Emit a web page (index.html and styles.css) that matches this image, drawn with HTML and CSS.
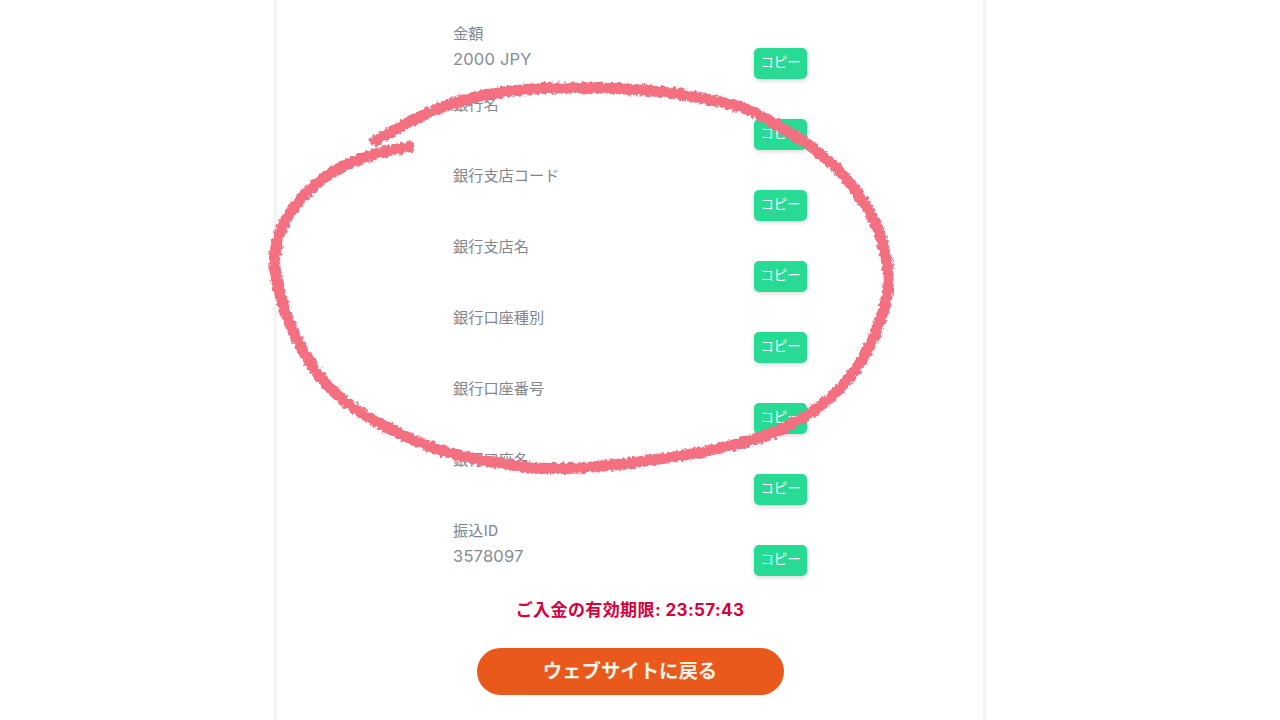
FILE: index.html
```html
<!DOCTYPE html>
<html lang="ja">
<head>
<meta charset="utf-8">
<title>ご入金</title>
<link rel="stylesheet" href="styles.css">
</head>
<body>
<main class="card">
  <div class="list">
    <div class="row"><div class="info"><div class="label">金額</div><div class="value">2000 JPY</div></div><button class="copy">コピー</button></div>
    <div class="row"><div class="info"><div class="label">銀行名</div><div class="value"></div></div><button class="copy">コピー</button></div>
    <div class="row"><div class="info"><div class="label">銀行支店コード</div><div class="value"></div></div><button class="copy">コピー</button></div>
    <div class="row"><div class="info"><div class="label">銀行支店名</div><div class="value"></div></div><button class="copy">コピー</button></div>
    <div class="row"><div class="info"><div class="label">銀行口座種別</div><div class="value"></div></div><button class="copy">コピー</button></div>
    <div class="row"><div class="info"><div class="label">銀行口座番号</div><div class="value"></div></div><button class="copy">コピー</button></div>
    <div class="row"><div class="info"><div class="label">銀行口座名</div><div class="value"></div></div><button class="copy">コピー</button></div>
    <div class="row"><div class="info"><div class="label">振込ID</div><div class="value">3578097</div></div><button class="copy">コピー</button></div>
  </div>
  <p class="expiry">ご入金の有効期限: 23:57:43</p>
  <button class="back">ウェブサイトに戻る</button>
</main>
<svg class="scribble" viewBox="0 0 1280 720" width="1280" height="720" aria-hidden="true">
  <defs>
    <filter id="rough" x="-5%" y="-5%" width="110%" height="110%">
      <feTurbulence type="fractalNoise" baseFrequency="0.28" numOctaves="2" seed="4"/>
      <feDisplacementMap in="SourceGraphic" scale="6" xChannelSelector="R" yChannelSelector="G"/>
      <feGaussianBlur stdDeviation="0.5"/>
    </filter>
  </defs>
  <path class="stroke" filter="url(#rough)" d="M375 141 Q410 120 435 110 Q460 100 485 95 Q510 90 543.5 88.5 Q577 87 613.5 88.5 Q650 90 675 93.5 Q700 97 723.5 102.5 Q747 108 763.5 117.5 Q780 127 796.5 137 Q813 147 830 162 Q847 177 863.5 202 Q880 227 886 257 Q892 287 882 315 Q873 343 860 363 Q847 383 830 398 Q813 413 790 425 Q767 437 733.5 445 Q700 453 666.5 458 Q633 463 603 466 Q573 469 550 468.5 Q527 468 493.5 462 Q460 457 431.5 447 Q403 437 368 417 Q333 397 313 367 Q293 337 283 305 Q273 273 275 255 Q277 234 287 218 Q297 201 313 187 Q329 172 352 162 Q375 152 409 147"/>
</svg>
</body>
</html>
```

FILE: styles.css
```css
* {
  box-sizing: border-box;
}

html,
body {
  margin: 0;
  height: 720px;
  overflow: hidden;
  background: #fff;
}

body {
  font-family: "Inter", "Noto Sans CJK JP", sans-serif;
  position: relative;
}

.card {
  width: 712px;
  height: 720px;
  margin-left: 274px;
  padding-top: 21px;
  border-left: 3px solid #f3f3f5;
  border-right: 3px solid #f3f3f5;
  display: flex;
  flex-direction: column;
  align-items: center;
}

.list {
  width: 354px;
  display: flex;
  flex-direction: column;
  gap: 13px;
}

.row {
  display: flex;
  justify-content: space-between;
  align-items: flex-end;
  height: 58px;
}

.info {
  align-self: flex-start;
}

.label {
  font-family: "Noto Sans CJK JP", sans-serif;
  font-size: 15.2px;
  line-height: 22px;
  color: #7f8691;
}

.value {
  margin-top: 3px;
  font-size: 16.5px;
  line-height: 26px;
  letter-spacing: 0.2px;
  min-height: 26px;
  color: #858c96;
}

.copy {
  width: 53px;
  height: 31px;
  padding: 0 0 3px;
  border: 0;
  border-radius: 5px;
  background: #27db94;
  box-shadow: 0 2px 4px rgba(0, 0, 0, 0.14);
  color: #fff;
  font-family: "Noto Sans CJK JP", sans-serif;
  font-size: 13.4px;
  line-height: 1;
}

.expiry {
  margin: 23px 0 0;
  font-family: "Inter", "Noto Sans CJK JP", sans-serif;
  font-size: 17px;
  line-height: 22px;
  font-weight: 700;
  letter-spacing: 0.4px;
  color: #d5003c;
}

.back {
  width: 307px;
  height: 47px;
  margin-top: 27px;
  padding: 0 0 5px;
  border: 0;
  border-radius: 24px;
  background: #e9591b;
  color: #fdf3ea;
  font-family: "Noto Sans CJK JP", sans-serif;
  font-size: 19.4px;
  font-weight: 700;
}

.scribble {
  position: absolute;
  left: 0;
  top: 0;
  pointer-events: none;
}

.stroke {
  fill: none;
  stroke: #f46f80;
  stroke-width: 11;
  stroke-linecap: round;
  stroke-linejoin: round;
}
```
